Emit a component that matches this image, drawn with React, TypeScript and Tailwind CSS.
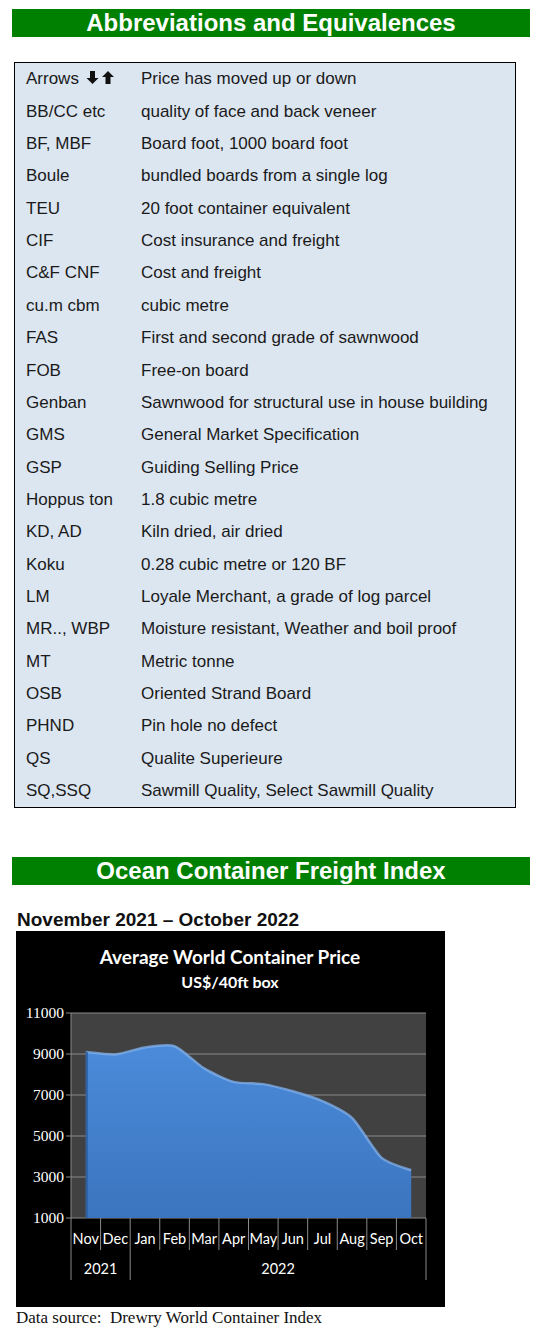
const rows: [string, string][] = [
  ['Arrows', 'Price has moved up or down'],
  ['BB/CC etc', 'quality of face and back veneer'],
  ['BF, MBF', 'Board foot, 1000 board foot'],
  ['Boule', 'bundled boards from a single log'],
  ['TEU', '20 foot container equivalent'],
  ['CIF', 'Cost insurance and freight'],
  ['C&F CNF', 'Cost and freight'],
  ['cu.m cbm', 'cubic metre'],
  ['FAS', 'First and second grade of sawnwood'],
  ['FOB', 'Free-on board'],
  ['Genban', 'Sawnwood for structural use in house building'],
  ['GMS', 'General Market Specification'],
  ['GSP', 'Guiding Selling Price'],
  ['Hoppus ton', '1.8 cubic metre'],
  ['KD, AD', 'Kiln dried, air dried'],
  ['Koku', '0.28 cubic metre or 120 BF'],
  ['LM', 'Loyale Merchant, a grade of log parcel'],
  ['MR.., WBP', 'Moisture resistant, Weather and boil proof'],
  ['MT', 'Metric tonne'],
  ['OSB', 'Oriented Strand Board'],
  ['PHND', 'Pin hole no defect'],
  ['QS', 'Qualite Superieure'],
  ['SQ,SSQ', 'Sawmill Quality, Select Sawmill Quality'],
];

const months = ['Nov', 'Dec', 'Jan', 'Feb', 'Mar', 'Apr', 'May', 'Jun', 'Jul', 'Aug', 'Sep', 'Oct'];
const prices = [9100, 8980, 9320, 9380, 8300, 7640, 7530, 7180, 6700, 5880, 3930, 3330];

const Arrows = () => (
  <svg width="30" height="15" viewBox="0 0 30 15" className="inline-block ml-[7px] -mt-[4px]">
    <path d="M4 1h5v7h3.5l-6 6-6-6h3.5z" fill="#111" />
    <path d="M19.5 14h5V7h3.5l-6-6-6 6h3.5z" fill="#111" />
  </svg>
);

const SectionHeader = ({ title }: { title: string }) => (
  <div className="ml-[12px] w-[518px] h-[28px] bg-[#008000] flex items-center justify-center">
    <span className="text-white font-bold text-[24px] leading-none font-['Liberation_Sans',Arial,sans-serif]">{title}</span>
  </div>
);

const Chart = () => {
  const L = 55, R = 410, T = 82, B = 287;
  const cw = (R - L) / 12;
  const y = (v: number) => B - ((v - 1000) / 10000) * (B - T);
  const pts = prices.map((p, i) => [L + cw * (i + 0.5), y(p)]);
  // catmull-rom with a low tension, close to the softened line segments in the picture
  const k = 0.12;
  let line = `M${pts[0][0]},${pts[0][1]}`;
  for (let i = 1; i < pts.length; i++) {
    const p0 = pts[Math.max(i - 2, 0)];
    const p1 = pts[i - 1];
    const p2 = pts[i];
    const p3 = pts[Math.min(i + 1, pts.length - 1)];
    const c1 = [p1[0] + (p2[0] - p0[0]) * k, p1[1] + (p2[1] - p0[1]) * k];
    const c2 = [p2[0] - (p3[0] - p1[0]) * k, p2[1] - (p3[1] - p1[1]) * k];
    line += ` C${c1[0]},${c1[1]} ${c2[0]},${c2[1]} ${p2[0]},${p2[1]}`;
  }
  const area = `M${pts[0][0]},${B} L${line.slice(1)} L${pts[pts.length - 1][0]},${B} Z`;
  const font = "Lato, 'Open Sans', sans-serif";

  return (
    <svg width="429" height="376" viewBox="0 0 429 376" className="block">
      <defs>
        <linearGradient id="area" x1="0" y1="0" x2="0" y2="1">
          <stop offset="0" stopColor="#4b8bd9" />
          <stop offset="1" stopColor="#3b74bf" />
        </linearGradient>
      </defs>
      <rect width="429" height="376" fill="#000" />
      <text x="214" y="33" textAnchor="middle" fill="#fff" fontSize="19" fontWeight="bold" fontFamily={font}>
        Average World Container Price
      </text>
      <text x="214" y="57" textAnchor="middle" fill="#fff" fontSize="16" fontWeight="bold" fontFamily={font}>
        US$/40ft box
      </text>
      <rect x={L} y={T} width={R - L} height={B - T} fill="#414141" />
      {[11000, 9000, 7000, 5000, 3000, 1000].map((v) => (
        <g key={v}>
          <line x1={L - 5} x2={R} y1={y(v)} y2={y(v)} stroke="#8a8a8a" strokeWidth="1" />
          <text x={L - 7} y={y(v) + 5} textAnchor="end" fill="#fff" fontSize="15.5" fontFamily="'Liberation Serif', serif">
            {v}
          </text>
        </g>
      ))}
      <path d={area} fill="url(#area)" />
      <path d={line} fill="none" stroke="#82b2ee" strokeWidth="2.5" opacity="0.75" />
      <line x1={pts[0][0] + 1} x2={pts[0][0] + 1} y1={pts[0][1]} y2={B} stroke="#2d5fa3" strokeWidth="2" />
      <line x1={L} x2={L} y1={T} y2={349} stroke="#8a8a8a" />
      {months.map((m, i) => (
        <g key={m}>
          <line x1={L + cw * (i + 1)} x2={L + cw * (i + 1)} y1={B} y2={i === 1 || i === 11 ? 349 : 319} stroke="#8a8a8a" />
          <text x={L + cw * (i + 0.5)} y={313} textAnchor="middle" fill="#fff" fontSize="14.5" fontFamily={font}>
            {m}
          </text>
        </g>
      ))}
      <text x={L + cw} y={343} textAnchor="middle" fill="#fff" fontSize="14.5" fontFamily={font}>2021</text>
      <text x={(L + cw * 2 + R) / 2} y={343} textAnchor="middle" fill="#fff" fontSize="14.5" fontFamily={font}>2022</text>
    </svg>
  );
};

export default function App() {
  return (
    <div className="w-[543px] h-[1338px] bg-white pt-[9px] font-['Liberation_Sans',Arial,sans-serif] text-[#1a1a1a]">
      <SectionHeader title="Abbreviations and Equivalences" />

      <div className="ml-[14px] mt-[25px] w-[502px] border border-black bg-[#dce6f1]">
        {rows.map(([abbr, desc], i) => (
          <div key={abbr} className="h-[32.35px] flex items-center text-[17px]">
            <div className="w-[126px] pl-[11px] whitespace-nowrap">
              {abbr}
              {i === 0 && <Arrows />}
            </div>
            <div className="whitespace-nowrap">{desc}</div>
          </div>
        ))}
      </div>

      <div className="mt-[49px]">
        <SectionHeader title="Ocean Container Freight Index" />
      </div>

      <div className="ml-[17px] mt-[24px] text-[19px] font-bold leading-[22px] text-[#111]">
        November 2021 – October 2022
      </div>
      <div className="ml-[16px]">
        <Chart />
      </div>
      <div className="ml-[16px] mt-[1px] text-[17px] leading-[20px] font-['Liberation_Serif','Times_New_Roman',serif] text-[#111]">
        Data source:&nbsp; Drewry World Container Index
      </div>
    </div>
  );
}
